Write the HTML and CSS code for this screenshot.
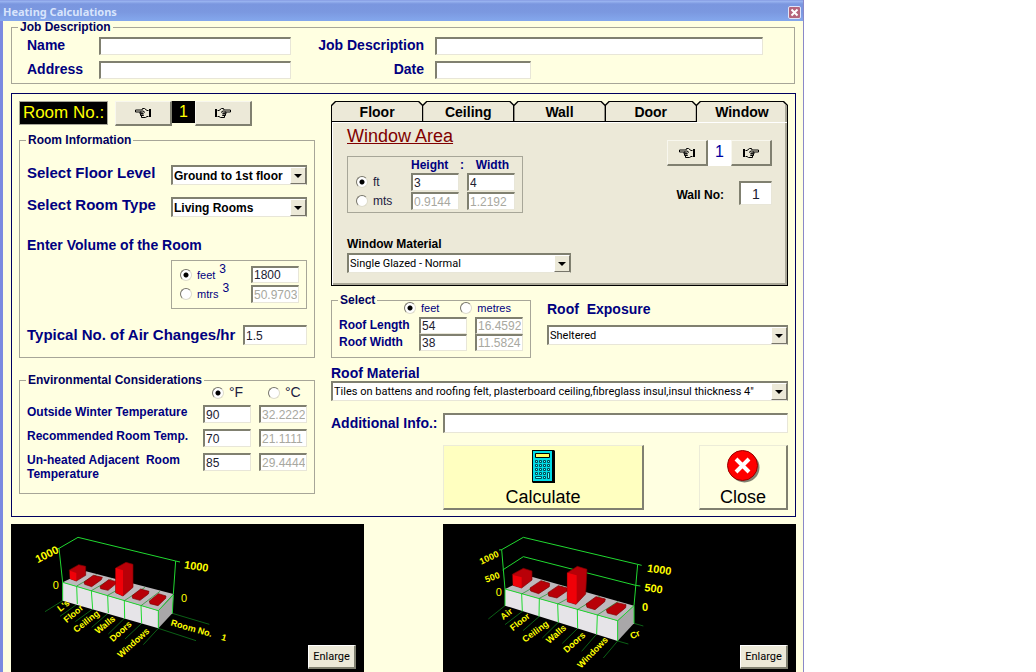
FILE: index.html
```html
<!DOCTYPE html>
<html lang="en">
<head>
<meta charset="utf-8">
<title>Heating Calculations</title>
<link rel="stylesheet" href="styles.css">
</head>
<body>
<svg class="defs" aria-hidden="true">
  <symbol id="hand-right" viewBox="0 0 18 12">
    <path d="M1 2h2v8H1z" fill="#000"/>
    <path d="M3.500 3.500H5L7.500 1.500H9.500L10 3H16.500V5H10.500M8.500 5H12V6.800H8.500M8.500 6.800H11.500V8.500H8.500M8.500 8.500H10.500V10.500H6.500L5 9.500H3.500M7 5.500L9.500 3.500" fill="none" stroke="#000"/>
  </symbol>
</svg>
<div class="window">
  <header class="titlebar">
    <h1 class="titlebar-text">Heating Calculations</h1>
    <button class="titlebar-close" type="button" aria-label="Close window">
      <svg viewBox="0 0 9 9" width="9" height="9"><path d="M1.500 1.500L7.500 7.500M7.500 1.500L1.500 7.500" stroke="#fff" stroke-width="2"/></svg>
    </button>
  </header>

  <form class="form">
    <fieldset class="group job">
      <legend>Job Description</legend>
      <div class="job-grid">
        <label class="lead" for="name">Name</label>
        <input class="field" id="name" type="text">
        <label class="lead lead-right" for="job">Job Description</label>
        <input class="field" id="job" type="text">
        <label class="lead" for="address">Address</label>
        <input class="field" id="address" type="text">
        <label class="lead lead-right" for="date">Date</label>
        <input class="field date" id="date" type="text">
      </div>
    </fieldset>

    <div class="main">
      <div class="left">
        <div class="room-nav">
          <span class="room-label">Room No.:</span>
          <button class="nav-btn" type="button" aria-label="Previous room"><svg class="hand flip"><use href="#hand-right"/></svg></button>
          <output class="room-number">1</output>
          <button class="nav-btn" type="button" aria-label="Next room"><svg class="hand"><use href="#hand-right"/></svg></button>
        </div>

        <fieldset class="group room">
          <legend>Room Information</legend>
          <div class="room-selects">
            <label class="lead large" for="floor">Select Floor Level</label>
            <span class="combo strong"><select id="floor"><option>Ground to 1st floor</option></select></span>
            <label class="lead large" for="type">Select Room Type</label>
            <span class="combo strong"><select id="type"><option>Living Rooms</option></select></span>
          </div>
          <p class="lead volume-title">Enter Volume of the Room</p>
          <div class="volume-box">
            <label class="choice small"><input type="radio" name="vol" checked>feet<sup>3</sup></label>
            <input class="field compact" type="text" value="1800" aria-label="Volume in cubic feet">
            <label class="choice small"><input type="radio" name="vol">mtrs<sup>3</sup></label>
            <input class="field" type="text" value="50.97033" disabled aria-label="Volume in cubic metres">
          </div>
          <div class="air-row">
            <label class="lead large" for="air">Typical No. of Air Changes/hr</label>
            <input class="field" id="air" type="text" value="1.5">
          </div>
        </fieldset>

        <fieldset class="group env">
          <legend>Environmental Considerations</legend>
          <div class="env-grid">
            <span></span>
            <label class="choice unit"><input type="radio" name="temp" checked>°F</label>
            <label class="choice unit"><input type="radio" name="temp">°C</label>
            <label class="note" for="outside">Outside Winter Temperature</label>
            <input class="field" id="outside" type="text" value="90">
            <input class="field" type="text" value="32.2222" disabled aria-label="Outside, Celsius">
            <label class="note" for="recommended">Recommended Room Temp.</label>
            <input class="field" id="recommended" type="text" value="70">
            <input class="field" type="text" value="21.1111" disabled aria-label="Recommended, Celsius">
            <label class="note" for="unheated">Un-heated Adjacent&nbsp; Room Temperature</label>
            <input class="field" id="unheated" type="text" value="85">
            <input class="field" type="text" value="29.4444" disabled aria-label="Un-heated, Celsius">
          </div>
        </fieldset>
      </div>

      <div class="right">
        <div class="tabs" role="tablist">
          <button class="tab" type="button" role="tab"><span>Floor</span></button>
          <button class="tab" type="button" role="tab"><span>Ceiling</span></button>
          <button class="tab" type="button" role="tab"><span>Wall</span></button>
          <button class="tab" type="button" role="tab"><span>Door</span></button>
          <button class="tab active" type="button" role="tab" aria-selected="true"><span>Window</span></button>
        </div>
        <section class="panel">
          <div class="panel-left">
            <h2 class="panel-title">Window Area</h2>
            <div class="area-box">
              <span></span>
              <span class="area-head"><span>Height</span><span>:</span><span>Width</span></span>
              <label class="choice"><input type="radio" name="area" checked>ft</label>
              <input class="field" type="text" value="3" aria-label="Height in feet">
              <input class="field" type="text" value="4" aria-label="Width in feet">
              <label class="choice"><input type="radio" name="area">mts</label>
              <input class="field" type="text" value="0.9144" disabled aria-label="Height in metres">
              <input class="field" type="text" value="1.2192" disabled aria-label="Width in metres">
            </div>
            <label class="caption" for="material">Window Material</label>
            <span class="combo"><select id="material"><option>Single Glazed - Normal</option></select></span>
          </div>
          <div class="panel-right">
            <div class="window-nav">
              <button class="nav-btn" type="button" aria-label="Previous window"><svg class="hand flip"><use href="#hand-right"/></svg></button>
              <output class="window-number">1</output>
              <button class="nav-btn" type="button" aria-label="Next window"><svg class="hand"><use href="#hand-right"/></svg></button>
            </div>
            <div class="wall-row">
              <label class="caption" for="wall">Wall No:</label>
              <input class="field wall" id="wall" type="text" value="1">
            </div>
          </div>
        </section>

        <div class="roof-row">
          <fieldset class="group roof">
            <legend>Select</legend>
            <div class="roof-units">
              <label class="choice small"><input type="radio" name="roof" checked>feet</label>
              <label class="choice small"><input type="radio" name="roof">metres</label>
            </div>
            <div class="roof-grid">
              <label class="dim" for="length">Roof Length</label>
              <input class="field" id="length" type="text" value="54">
              <input class="field" type="text" value="16.4592" disabled aria-label="Roof length in metres">
              <label class="dim" for="width">Roof Width</label>
              <input class="field" id="width" type="text" value="38">
              <input class="field" type="text" value="11.5824" disabled aria-label="Roof width in metres">
            </div>
          </fieldset>
          <div class="exposure">
            <label class="lead" for="exposure">Roof&nbsp; Exposure</label>
            <span class="combo"><select id="exposure"><option>Sheltered</option></select></span>
          </div>
        </div>

        <label class="lead roof-material" for="roofmat">Roof Material</label>
        <span class="combo"><select id="roofmat"><option>Tiles on battens and roofing felt, plasterboard ceiling,fibreglass insul,insul thickness 4"</option></select></span>

        <div class="info-row">
          <label class="lead" for="info">Additional Info.:</label>
          <input class="field" id="info" type="text">
        </div>

        <div class="actions">
          <button class="action calculate" type="button">
            <svg width="23" height="33" viewBox="0 0 23 33">
              <path d="M0 0H22L23 1V33H1L0 32z" fill="#000"/>
              <path d="M1 1H20V31H1z" fill="#00dce8"/>
              <path d="M3.500 3.500H17.500V7.500H3.500z" fill="#ffff60" stroke="#000"/>
              <path d="M3.500 10.500h2v2h-2zM7.500 10.500h2v2h-2zM11.500 10.500h2v2h-2zM15.500 10.500h2v2h-2zM3.500 14.500h2v2h-2zM7.500 14.500h2v2h-2zM11.500 14.500h2v2h-2zM15.500 14.500h2v2h-2zM3.500 18.500h2v2h-2zM7.500 18.500h2v2h-2zM11.500 18.500h2v2h-2zM15.500 18.500h2v2h-2zM3.500 22.500h2v2h-2zM7.500 22.500h2v2h-2zM11.500 22.500h2v2h-2zM15.500 22.500h2v6h-2zM3.500 26.500h6v2h-6zM11.500 26.500h2v2h-2z" fill="#5ff" stroke="#004c58"/>
            </svg>
            Calculate
          </button>
          <button class="action close" type="button">
            <svg width="33" height="33" viewBox="0 0 33 33">
              <circle cx="17.500" cy="17.500" r="15" fill="#808070"/>
              <circle cx="15.500" cy="15.500" r="15" fill="#f00" stroke="#900"/>
              <path d="M9 9L22 22M22 9L9 22" stroke="#fff" stroke-width="4"/>
            </svg>
            Close
          </button>
        </div>
      </div>
    </div>

    <div class="charts">
      <figure class="chart">
        <svg class="plot" viewBox="33 30 1059 441" role="img" aria-label="Room heat loss">
          <g class="wire">
            <path d="M188 205L177 103L234 70L527 141L520 240M527 141L540 144M170 105L177 103"/>
            <path class="thin" d="M188 260L135 293M232 270L180 307M278 285L226 323M325 297L275 340M372 314L325 360M425 328L375 375M475 343L430 392M475 343L588 380M517 298L628 331"/>
          </g>
          <path d="M188 205L258 172L520 240L475 290z" fill="#bdb9bd"/>
          <path d="M188 205L475 290V343L188 260z" fill="#e6e4e8"/>
          <path d="M475 290L520 242L517 298L475 343z" fill="#a9a7a9"/>
          <g class="wire">
            <path d="M188 205L475 290V343M188 205V260M230 216L232 270M274 230L278 285M323 244L325 297M373 260L374 314M423 275L425 328M475 290L520 242L517 298"/>
            <path class="thin" d="M230 216L290 182M274 230L335 195M323 244L390 207M373 260L435 220M423 275L480 232"/>
          </g>
          <g class="bar">
            <path d="M208 168L236 152L257 157V184L229 201L210 194z"/>
            <path d="M252 204L280 184L307 190L304 197L275 218L254 211z"/>
            <path d="M300 217L326 197L350 203L347 210L324 229L302 224z"/>
            <path d="M347 162L378 145L399 151V220L369 246L347 236z"/>
            <path d="M396 245L422 225L447 232L445 240L420 259L398 253z"/>
            <path d="M448 261L475 239L498 246L497 253L474 275L450 269z"/>
          </g>
          <g class="bar-face"><path d="M210 170L229 177V201L210 194zM347 162L369 169V246L347 236z"/></g>
          <g class="axis-value">
            <text transform="translate(113 148) rotate(-27)">1000</text>
            <text class="light" transform="translate(158 225)">0</text>
            <text transform="translate(551 163) rotate(8)">1000</text>
            <text class="light" transform="translate(543 263)">0</text>
          </g>
          <g class="axis-name">
            <text transform="translate(181 294) rotate(-38)">L's</text>
            <text transform="translate(200 328) rotate(-40)">Floor</text>
            <text transform="translate(229 357) rotate(-38)">Ceiling</text>
            <text transform="translate(294 361) rotate(-39)">Walls</text>
            <text transform="translate(339 385) rotate(-42)">Doors</text>
            <text transform="translate(362 433) rotate(-42)">Windows</text>
            <text xml:space="preserve" transform="translate(511 334) rotate(16)">Room No.    1</text>
          </g>
        </svg>
        <button class="enlarge" type="button">Enlarge</button>
      </figure>
      <figure class="chart">
        <svg class="plot" viewBox="24 30 1059 441" role="img" aria-label="Total heat loss">
          <g class="wire">
            <path d="M210 225L200 107L265 70L608 151L597 275M608 151L620 154M192 108L200 107M203 168L265 128L602 214L616 216"/>
            <path class="thin" d="M210 275L160 315M262 292L210 332M312 308L264 350M370 325L322 372M428 343L382 388M485 360L440 412M548 381L505 432M548 381L580 390M597 328L625 336"/>
          </g>
          <path d="M210 225L290 188L597 275L548 320z" fill="#bdb9bd"/>
          <path d="M210 225L548 320V381L210 275z" fill="#e6e4e8"/>
          <path d="M548 320L597 275V328L548 381z" fill="#a9a7a9"/>
          <g class="wire">
            <path d="M210 225L548 320V381M210 225V275M260 240L262 292M313 253L312 308M368 270L370 325M427 287L428 343M487 303L485 360M548 320L597 275V328"/>
            <path class="thin" d="M260 240L330 200M313 253L385 215M368 270L440 231M427 287L495 246M487 303L550 262"/>
          </g>
          <g class="bar">
            <path d="M232 181L265 163L291 171V198L260 222L234 214z"/>
            <path d="M285 222L318 200L344 208L343 218L311 239L287 231z"/>
            <path d="M339 236L370 215L397 222L396 231L366 252L341 246z"/>
            <path d="M397 176L427 157L456 166L452 240L423 271L397 263z"/>
            <path d="M453 270L483 248L511 255L509 263L480 287L456 280z"/>
            <path d="M514 287L546 266L573 272L572 281L544 304L517 297z"/>
          </g>
          <g class="bar-face"><path d="M234 183L260 190V222L234 214zM397 176L425 184V271L397 263z"/></g>
          <g class="axis-value">
            <text class="near" transform="translate(139 152) rotate(-25)">1000</text>
            <text class="near" transform="translate(154 206) rotate(-20)">500</text>
            <text class="light" transform="translate(182 245)">0</text>
            <text transform="translate(635 173) rotate(8)">1000</text>
            <text transform="translate(627 231) rotate(8)">500</text>
            <text transform="translate(621 291)">0</text>
          </g>
          <g class="axis-name">
            <text transform="translate(205 319) rotate(-38)">Air</text>
            <text transform="translate(234 352) rotate(-39)">Floor</text>
            <text transform="translate(270 386) rotate(-36)">Ceiling</text>
            <text transform="translate(343 390) rotate(-41)">Walls</text>
            <text transform="translate(395 418) rotate(-42)">Doors</text>
            <text transform="translate(438 464) rotate(-46)">Windows</text>
            <text transform="translate(590 376) rotate(-24)">Cr</text>
          </g>
        </svg>
        <button class="enlarge" type="button">Enlarge</button>
      </figure>
    </div>
  </form>
</div>
</body>
</html>
```
FILE: styles.css
```css
:root {
  --cream: #ffffe1;
  --face: #ece9d8;
  --navy: #000080;
  --shade: #808070;
  --line: #a7a698;
}

* { box-sizing: border-box; }

body {
  margin: 0;
  background: #fff;
  font-family: "Liberation Sans", Arial, sans-serif;
  font-size: 12px;
  color: #000;
}

button, input, select { font: inherit; margin: 0; }
p, h1, h2, figure { margin: 0; }
.defs { position: absolute; width: 0; height: 0; }

.window {
  max-width: 804px;
  min-height: 100vh;
  display: flex;
  flex-direction: column;
  background: var(--cream);
  border-left: 3px solid #7b8ae0;
  border-right: 1px solid #8a88c8;
}

.titlebar {
  height: 21px;
  margin-left: -3px;
  padding: 3px 2px 0 3px;
  display: flex;
  align-items: center;
  justify-content: space-between;
  background: linear-gradient(#7b8fdc 0, #9db7f2 1px, #7a96df 4px, #7b98e0 12px, #83a6ec 20px);
}

.titlebar-text {
  font: bold 11px/18px "Noto Sans", "Open Sans", sans-serif;
  color: #d8e4fc;
}

.titlebar-close {
  width: 13px;
  height: 13px;
  padding: 0;
  display: grid;
  place-items: center;
  background: #b5657c;
  border: 1px solid #dfe4fa;
  border-radius: 2px;
}

.form {
  flex: 1;
  display: flex;
  flex-direction: column;
  padding: 0 7px 0 8px;
}

/* Shared controls */
.group {
  min-width: 0;
  margin: 0;
  padding: 0 7px;
  border: 1px solid var(--line);
}

.group legend {
  margin-left: -1px;
  padding: 0 2px;
  font-weight: bold;
  line-height: 12px;
  color: #000060;
}

.lead {
  font-size: 14px;
  font-weight: bold;
  line-height: 16px;
  color: var(--navy);
  white-space: nowrap;
}

.large { font-size: 15px; }

.field {
  width: 100%;
  min-width: 0;
  height: 18px;
  padding: 0 1px;
  background: #fff;
  border: solid;
  border-width: 2px 1px 1px 2px;
  border-color: var(--shade) #e8e6d8 #e8e6d8 var(--shade);
  color: #202030;
}

.field:disabled { color: #a8a8a0; }

.combo {
  position: relative;
  display: block;
  height: 20px;
  background: #fff;
  border: solid;
  border-width: 2px 1px 1px 2px;
  border-color: var(--shade) var(--shade) #e8e6d8 var(--shade);
}

.combo select {
  appearance: none;
  display: block;
  width: 100%;
  height: 17px;
  padding: 0 18px 0 1px;
  background: none;
  border: 0;
  border-radius: 0;
  font-family: Roboto, "Liberation Sans", sans-serif;
  font-size: 11px;
  color: #000;
}

.combo.strong select {
  font-family: "Liberation Sans", Arial, sans-serif;
  font-size: 12px;
  font-weight: bold;
}

.combo::before {
  content: "";
  position: absolute;
  top: 0;
  right: 0;
  width: 16px;
  height: 17px;
  box-sizing: border-box;
  background: var(--face);
  border: 1px solid;
  border-color: #fff #77756a #77756a #fff;
  pointer-events: none;
}

.combo::after {
  content: "";
  position: absolute;
  top: 7px;
  right: 4px;
  border: 4px solid transparent;
  border-top-color: #000;
  border-bottom-width: 0;
  pointer-events: none;
}

.choice {
  display: flex;
  align-items: center;
  gap: 5px;
  line-height: 14px;
  color: #202040;
}

.choice input {
  appearance: none;
  flex: none;
  width: 12px;
  height: 12px;
  background: #fff;
  border: 1px solid;
  border-color: #77756a #dedccb #dedccb #77756a;
  border-radius: 50%;
}

.choice input:checked {
  background: radial-gradient(circle, #000 0 2px, #fff 3px);
}

.choice.small { font-size: 11px; color: var(--navy); }

.nav-btn {
  padding: 0;
  display: grid;
  place-items: center;
  background: var(--face);
  border: solid;
  border-width: 1px 2px 2px 1px;
  border-color: #f8f7ee var(--shade) var(--shade) #f8f7ee;
}

.hand { width: 18px; height: 12px; }
.flip { transform: scaleX(-1); }

/* Job description */
.job { margin-right: 1px; padding: 0 31px 4px 15px; }
.job legend { margin-left: -9px; }

.job-grid {
  display: grid;
  grid-template-columns: 72px 192px 144px 1fr;
  gap: 6px 0;
  padding-top: 4px;
}

.lead-right { padding-right: 11px; text-align: right; }
.date { width: 96px; }

/* Main frame */
.main {
  display: flex;
  gap: 16px;
  margin-top: 9px;
  padding: 7px 7px 6px;
  border: 1px solid #000060;
}

.left { flex: 0 0 296px; }
.right { flex: 1; min-width: 0; }

.room-nav {
  display: flex;
  align-items: flex-start;
  height: 25px;
}

.room-label {
  width: 89px;
  margin-right: 7px;
  border: 1px solid #a7a698;
  background: #000;
  color: #ff0;
  font-size: 17px;
  line-height: 22px;
  text-align: center;
  white-space: nowrap;
}

.room-nav .nav-btn { width: 57px; height: 25px; }

.room-number {
  width: 23px;
  background: #000;
  color: #ff0;
  font-size: 16px;
  line-height: 22px;
  text-align: center;
}

.room { margin-top: 8px; padding-bottom: 12px; }

.room-selects {
  display: grid;
  grid-template-columns: 1fr 136px;
  gap: 12px 0;
  padding-top: 19px;
}

.volume-title { margin-top: 20px; }

.volume-box {
  display: grid;
  grid-template-columns: 1fr 48px;
  gap: 2px 0;
  width: 136px;
  margin: 7px 0 16px auto;
  padding: 5px 7px 5px 8px;
  border: 1px solid var(--line);
}

.volume-box .compact { height: 17px; }
.volume-box sup { align-self: flex-start; margin-left: -1px; font-size: 12px; line-height: 6px; }

.air-row { display: flex; justify-content: space-between; align-items: center; }
.air-row .field { width: 64px; height: 20px; }

.env { margin-top: 16px; padding-bottom: 12px; }

.env-grid {
  display: grid;
  grid-template-columns: 1fr 48px 48px;
  gap: 6px 8px;
}

.unit { padding-left: 9px; line-height: 13px; font-size: 14px; }
.note { font-size: 12px; font-weight: bold; line-height: 14px; color: var(--navy); }

/* Tabs */
.tabs { position: relative; z-index: 1; display: flex; }

.tab {
  position: relative;
  flex: 1;
  height: 21px;
  margin: 0 0 -1px -1px;
  padding: 0;
  border: 0;
  background: #000;
  clip-path: polygon(0 4px, 4px 0, calc(100% - 4px) 0, 100% 4px, 100% 100%, 0 100%);
  font-size: 14px;
  font-weight: bold;
}

.tab:first-child { margin-left: 0; }

.tab::before {
  content: "";
  position: absolute;
  inset: 1px;
  background: var(--face);
  clip-path: polygon(0 4px, 4px 0, calc(100% - 4px) 0, 100% 4px, 100% 100%, 0 100%);
}

.tab.active::before { bottom: 0; box-shadow: inset -2px 0 #aaa898; }
.tab span { position: relative; line-height: 20px; }

.panel {
  display: flex;
  justify-content: space-between;
  padding: 5px 15px 12px;
  background: var(--face);
  border: 1px solid #000;
  box-shadow: inset 1px 1px #fff, inset -2px -2px #aaa898;
}

.panel-title {
  font-size: 18px;
  font-weight: normal;
  line-height: 18px;
  text-decoration: underline;
  color: #800000;
}

.panel-left { flex: 0 1 224px; }

.area-box {
  display: grid;
  grid-template-columns: 1fr 48px 48px;
  gap: 1px 8px;
  width: 176px;
  margin: 11px 0 24px;
  padding: 1px 7px 2px 8px;
  border: 1px solid var(--line);
}

.area-head {
  grid-column: 2 / 4;
  display: flex;
  justify-content: space-between;
  padding-right: 6px;
  line-height: 14px;
  font-weight: bold;
  color: var(--navy);
}

.caption {
  display: block;
  margin-bottom: 2px;
  font-size: 12px;
  font-weight: bold;
  line-height: 14px;
}

.panel-right { padding-top: 13px; }
.window-nav { display: flex; }
.window-nav .nav-btn { width: 41px; height: 26px; }

.window-number {
  width: 23px;
  background: #fff;
  color: #0000a0;
  font-size: 16px;
  line-height: 24px;
  text-align: center;
}

.wall-row {
  display: flex;
  align-items: center;
  justify-content: flex-end;
  gap: 15px;
  margin-top: 15px;
}

.wall-row .caption { margin-bottom: 0; padding-top: 4px; }
.wall { width: 33px; height: 24px; text-align: center; font-size: 14px; }

/* Roof */
.roof-row { display: flex; gap: 16px; margin-top: 8px; }
.roof { flex: 0 0 200px; padding-bottom: 6px; }

.roof-units {
  display: flex;
  gap: 21px;
  margin-top: -5px;
  padding-left: 65px;
}

.roof-grid {
  display: grid;
  grid-template-columns: 1fr 48px 48px;
  column-gap: 8px;
  padding-top: 2px;
}

.roof-grid .field { height: 17px; }
.dim { font-weight: bold; line-height: 16px; color: var(--navy); white-space: nowrap; }

.exposure { flex: 1; padding-top: 7px; }
.exposure .lead { display: block; margin-bottom: 8px; }
.roof-material { display: block; margin-top: 7px; }

.info-row { display: flex; align-items: center; gap: 6px; margin-top: 12px; }
.info-row .lead { width: 106px; }
.info-row .field { flex: 1; height: 20px; }

.actions {
  display: flex;
  justify-content: space-between;
  margin: 12px 0 0 112px;
}

.action {
  display: flex;
  flex-direction: column;
  align-items: center;
  gap: 4px;
  padding: 4px 0 1px;
  font-size: 18px;
  line-height: 20px;
  color: #000;
  border: solid;
  border-width: 1px 2px 2px 1px;
  border-color: #ececd8 var(--shade) var(--shade) #ececd8;
}

.calculate { width: 201px; background: #ffffc0; }
.close { width: 89px; background: var(--cream); }

/* Charts */
.charts {
  flex: 1;
  display: flex;
  justify-content: space-between;
  margin-top: 7px;
}

.chart {
  position: relative;
  flex: 0 1 353px;
  background: #000;
}

.plot { display: block; width: 100%; }

.wire path { fill: none; stroke: #20d830; stroke-width: 3; }
.wire .thin { stroke: #109020; stroke-width: 2; }
.bar path { fill: #b80008; stroke: #7c0000; stroke-width: 2; }
.bar-face path { fill: #f00008; }
.axis-value, .axis-name { fill: #ff0; font-weight: bold; }
.axis-value { font-size: 33px; }
.axis-value .near { font-size: 27px; }
.axis-value .light { font-weight: normal; }
.axis-name { font-size: 27px; }

.enlarge {
  position: absolute;
  right: 8px;
  bottom: 3px;
  width: 48px;
  height: 24px;
  padding: 0;
  font-family: Roboto, "Liberation Sans", sans-serif;
  font-size: 11px;
  background: var(--face);
  border: solid;
  border-width: 1px 2px 2px 1px;
  border-color: #fff var(--shade) var(--shade) #fff;
}
```
